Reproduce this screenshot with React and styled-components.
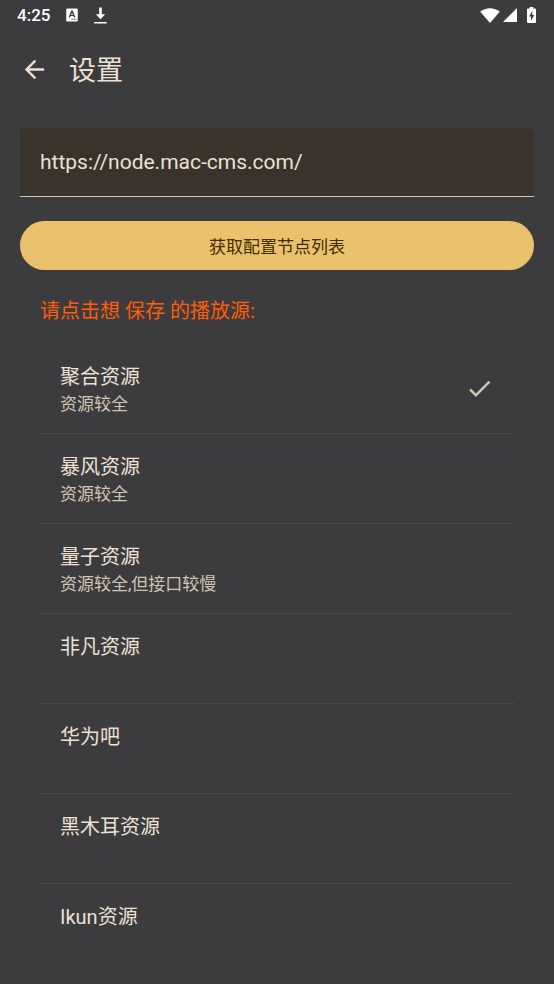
import React, { useState } from 'react';
import styled, { createGlobalStyle } from 'styled-components';

const sources = [
  { id: 'juhe', title: '聚合资源', note: '资源较全' },
  { id: 'baofeng', title: '暴风资源', note: '资源较全' },
  { id: 'liangzi', title: '量子资源', note: '资源较全,但接口较慢' },
  { id: 'feifan', title: '非凡资源', note: '' },
  { id: 'huaweiba', title: '华为吧', note: '' },
  { id: 'heimuer', title: '黑木耳资源', note: '' },
  { id: 'ikun', title: 'Ikun资源', note: '' },
];

const GlobalStyle = createGlobalStyle`
  * {
    box-sizing: border-box;
  }

  body {
    margin: 0;
    background: #3c3b3d;
    color: #ece1d4;
    font-family: Roboto, 'Noto Sans CJK SC', sans-serif;
  }

  button,
  input {
    font-family: inherit;
  }
`;

const Screen = styled.div`
  min-height: 100vh;
`;

const StatusBar = styled.div`
  display: flex;
  align-items: center;
  justify-content: space-between;
  height: 30px;
  padding: 0 18px 0 17px;
  color: #fff;
`;

const StatusGroup = styled.div`
  display: flex;
  align-items: center;
  gap: ${({ $gap }) => $gap}px;
`;

const Clock = styled.span`
  font-size: 17px;
  font-weight: 500;
  line-height: 20px;
`;

const AppBar = styled.header`
  display: flex;
  align-items: center;
  gap: 20px;
  height: 78px;
  padding: 0 20px;
`;

const BackButton = styled.button`
  display: flex;
  padding: 0;
  border: 0;
  background: none;
  color: #ece1d4;
`;

const Title = styled.h1`
  margin: 0;
  font-family: 'Noto Sans CJK SC', sans-serif;
  font-size: 27px;
  font-weight: 400;
  line-height: 36px;
`;

const Main = styled.main`
  display: flex;
  flex-direction: column;
  gap: 24px;
  padding: 20px 20px 0;
`;

const UrlInput = styled.input`
  width: 100%;
  height: 69px;
  padding: 0 20px;
  border: 0;
  border-bottom: 1px solid #d1c5b4;
  border-radius: 5px 5px 0 0;
  outline: 0;
  background: #39332b;
  color: #ece1d4;
  font-size: 21px;
`;

const FetchButton = styled.button`
  height: 49px;
  border: 0;
  border-radius: 25px;
  background: #eac16c;
  color: #402d00;
  font-size: 17px;
`;

const SourceSection = styled.section`
  padding: 0 20px;
`;

const Hint = styled.h2`
  margin: 0 0 16px;
  color: #ff5d0a;
  font-size: 20px;
  font-weight: 400;
  line-height: 34px;
`;

const SourceList = styled.ul`
  margin: 0;
  padding: 0;
  list-style: none;
`;

const SourceItem = styled.li`
  border-bottom: 1px solid #4d4639;

  &:last-child {
    border-bottom: 0;
  }
`;

const SourceButton = styled.button`
  display: flex;
  align-items: center;
  justify-content: space-between;
  width: 100%;
  padding: 0 20px;
  border: 0;
  background: none;
  color: inherit;
  text-align: left;
`;

const SourceText = styled.span`
  display: grid;
  grid-template-rows: 27px 26px;
  padding: 20px 0 16px;
`;

const SourceTitle = styled.span`
  font-size: 20px;
  line-height: 27px;
`;

const SourceNote = styled.span`
  color: #d1c5b4;
  font-size: 17px;
  line-height: 26px;
`;

const CheckMark = styled.svg`
  flex: none;
  color: #d1c5b4;
`;

const KeyboardIcon = () => (
  <svg width="12" height="14" viewBox="0 0 12 14" aria-hidden="true">
    <path
      fill="currentColor"
      fillRule="evenodd"
      d="M1.2.5h9.6q1 0 1 1v11q0 1-1 1H1.2q-1 0-1-1v-11q0-1 1-1zM5.2 2.600L2.600 9.400h1.500l.5-1.400h2.800l.5 1.400h1.500L6.800 2.600zM6 4.600L6.900 6.900H5.100zM5.500 10.800v1h1.200v-1zM7.600 10.800v1h1.200v-1zM9.600 10.800v1h1v-1z"
    />
  </svg>
);

const DownloadIcon = () => (
  <svg width="13" height="17" viewBox="0 0 13 17" aria-hidden="true">
    <path
      fill="currentColor"
      d="M5.2.5h2.6v6.8h3.4L6.5 12.2 1.8 7.3h3.4zM.3 15h12.4v1.500H.3z"
    />
  </svg>
);

const WifiIcon = () => (
  <svg width="20" height="15" viewBox="0 0 20 15" aria-hidden="true">
    <path
      fill="currentColor"
      d="M10 15L.3 3.700C3 1.500 6.300.3 10 .3s7 1.200 9.700 3.400z"
    />
  </svg>
);

const SignalIcon = () => (
  <svg width="14" height="14" viewBox="0 0 14 14" aria-hidden="true">
    <path fill="currentColor" d="M0 14L14 0v14z" />
  </svg>
);

const BatteryIcon = () => (
  <svg width="9" height="16" viewBox="0 0 9 16" aria-hidden="true">
    <path
      fill="currentColor"
      fillRule="evenodd"
      d="M2.700 0h3.600v1.600H8q1 0 1 1V15q0 1-1 1H1q-1 0-1-1V2.600q0-1 1-1h1.700zM5.300 4L2 9.600h2V14l3.200-6h-1.900z"
    />
  </svg>
);

const App = () => {
  const [url, setUrl] = useState('https://node.mac-cms.com/');
  const [selected, setSelected] = useState('juhe');

  return (
    <Screen>
      <GlobalStyle />
      <StatusBar>
        <StatusGroup $gap={16}>
          <Clock>4:25</Clock>
          <KeyboardIcon />
          <DownloadIcon />
        </StatusGroup>
        <StatusGroup $gap={10}>
          <StatusGroup $gap={3}>
            <WifiIcon />
            <SignalIcon />
          </StatusGroup>
          <BatteryIcon />
        </StatusGroup>
      </StatusBar>
      <AppBar>
        <BackButton type="button" aria-label="返回">
          <svg width="29" height="29" viewBox="0 0 24 24" aria-hidden="true">
            <path
              fill="currentColor"
              d="M20 11H7.830l5.590-5.590L12 4l-8 8 8 8 1.410-1.410L7.830 13H20z"
            />
          </svg>
        </BackButton>
        <Title>设置</Title>
      </AppBar>
      <Main>
        <UrlInput
          type="text"
          aria-label="节点地址"
          value={url}
          onChange={(e) => setUrl(e.target.value)}
        />
        <FetchButton type="button">获取配置节点列表</FetchButton>
        <SourceSection>
          <Hint>请点击想 保存 的播放源:</Hint>
          <SourceList>
            {sources.map(({ id, title, note }) => (
              <SourceItem key={id}>
                <SourceButton
                  type="button"
                  aria-pressed={selected === id}
                  onClick={() => setSelected(id)}
                >
                  <SourceText>
                    <SourceTitle>{title}</SourceTitle>
                    {note && <SourceNote>{note}</SourceNote>}
                  </SourceText>
                  {selected === id && (
                    <CheckMark
                      width="29"
                      height="29"
                      viewBox="0 0 24 24"
                      aria-hidden="true"
                    >
                      <path
                        fill="currentColor"
                        d="M9 16.170L4.830 12l-1.420 1.410L9 19 21 7l-1.410-1.410z"
                      />
                    </CheckMark>
                  )}
                </SourceButton>
              </SourceItem>
            ))}
          </SourceList>
        </SourceSection>
      </Main>
    </Screen>
  );
};

export default App;
